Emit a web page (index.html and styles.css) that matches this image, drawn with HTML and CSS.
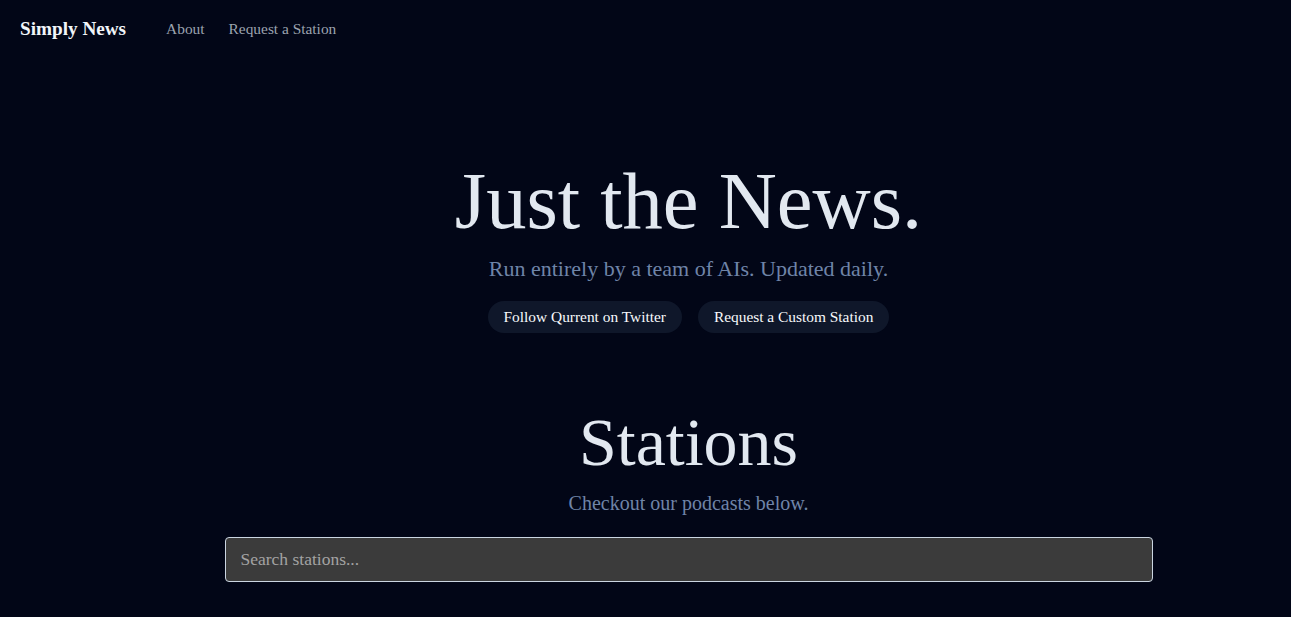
FILE: index.html
```html
<!DOCTYPE html>
<html lang="en">
<head>
<meta charset="utf-8">
<title>Simply News</title>
<link rel="stylesheet" href="styles.css">
</head>
<body>
<header class="nav">
  <a class="brand" href="#">Simply News</a>
  <nav class="links">
    <a href="#">About</a>
    <a href="#">Request a Station</a>
  </nav>
</header>
<main class="main">
  <section class="hero">
    <h1 class="hero-title">Just the News.</h1>
    <p class="hero-sub">Run entirely by a team of AIs. Updated daily.</p>
    <div class="actions">
      <a class="pill" href="#">Follow Qurrent on Twitter</a>
      <a class="pill" href="#">Request a Custom Station</a>
    </div>
  </section>
  <section class="stations">
    <h2 class="stations-title">Stations</h2>
    <p class="stations-sub">Checkout our podcasts below.</p>
    <input class="search" type="text" placeholder="Search stations...">
  </section>
</main>
</body>
</html>
```

FILE: styles.css
```css
html, body {
  margin: 0;
  padding: 0;
  background: #020617;
  color: #e2e8f0;
  font-family: "Liberation Serif", "DejaVu Serif", serif;
  height: 100%;
  overflow: hidden;
}
a { text-decoration: none; color: inherit; }

.nav {
  display: flex;
  align-items: center;
  height: 57px;
  padding: 0 20px;
  gap: 40px;
}
.brand {
  font-weight: 700;
  font-size: 19.2px;
  color: #f1f5f9;
}
.links {
  display: flex;
  gap: 24px;
  font-size: 15.4px;
  color: #9ca3af;
}

.main {
  padding-left: 86px;
  display: flex;
  flex-direction: column;
  align-items: center;
}
.hero {
  display: flex;
  flex-direction: column;
  align-items: center;
  margin-top: 104px;
}
.hero-title {
  margin: 0;
  font-size: 80.5px;
  font-weight: 400;
  line-height: 1;
  color: #e2e8f0;
}
.hero-sub {
  margin: 14px 0 0;
  font-size: 22px;
  color: #6f84a8;
}
.actions {
  display: flex;
  gap: 16px;
  margin-top: 19px;
}
.pill {
  background: #0f172a;
  border-radius: 999px;
  padding: 0 16px;
  height: 32px;
  display: flex;
  align-items: center;
  font-size: 15.4px;
  color: #f8fafc;
}

.stations {
  display: flex;
  flex-direction: column;
  align-items: center;
  margin-top: 75px;
}
.stations-title {
  margin: 0;
  font-size: 68px;
  font-weight: 400;
  line-height: 1;
}
.stations-sub {
  margin: 16px 0 0;
  font-size: 20px;
  color: #6f84a8;
}
.search {
  margin-top: 22px;
  width: 928px;
  height: 45px;
  box-sizing: border-box;
  background: #3b3b3b;
  border: 1px solid #cbd5e1;
  border-radius: 4px;
  padding: 0 15px;
  font-family: inherit;
  font-size: 17.5px;
  color: #e5e7eb;
  outline: none;
}
.search::placeholder { color: #a3a3a3; }
```
